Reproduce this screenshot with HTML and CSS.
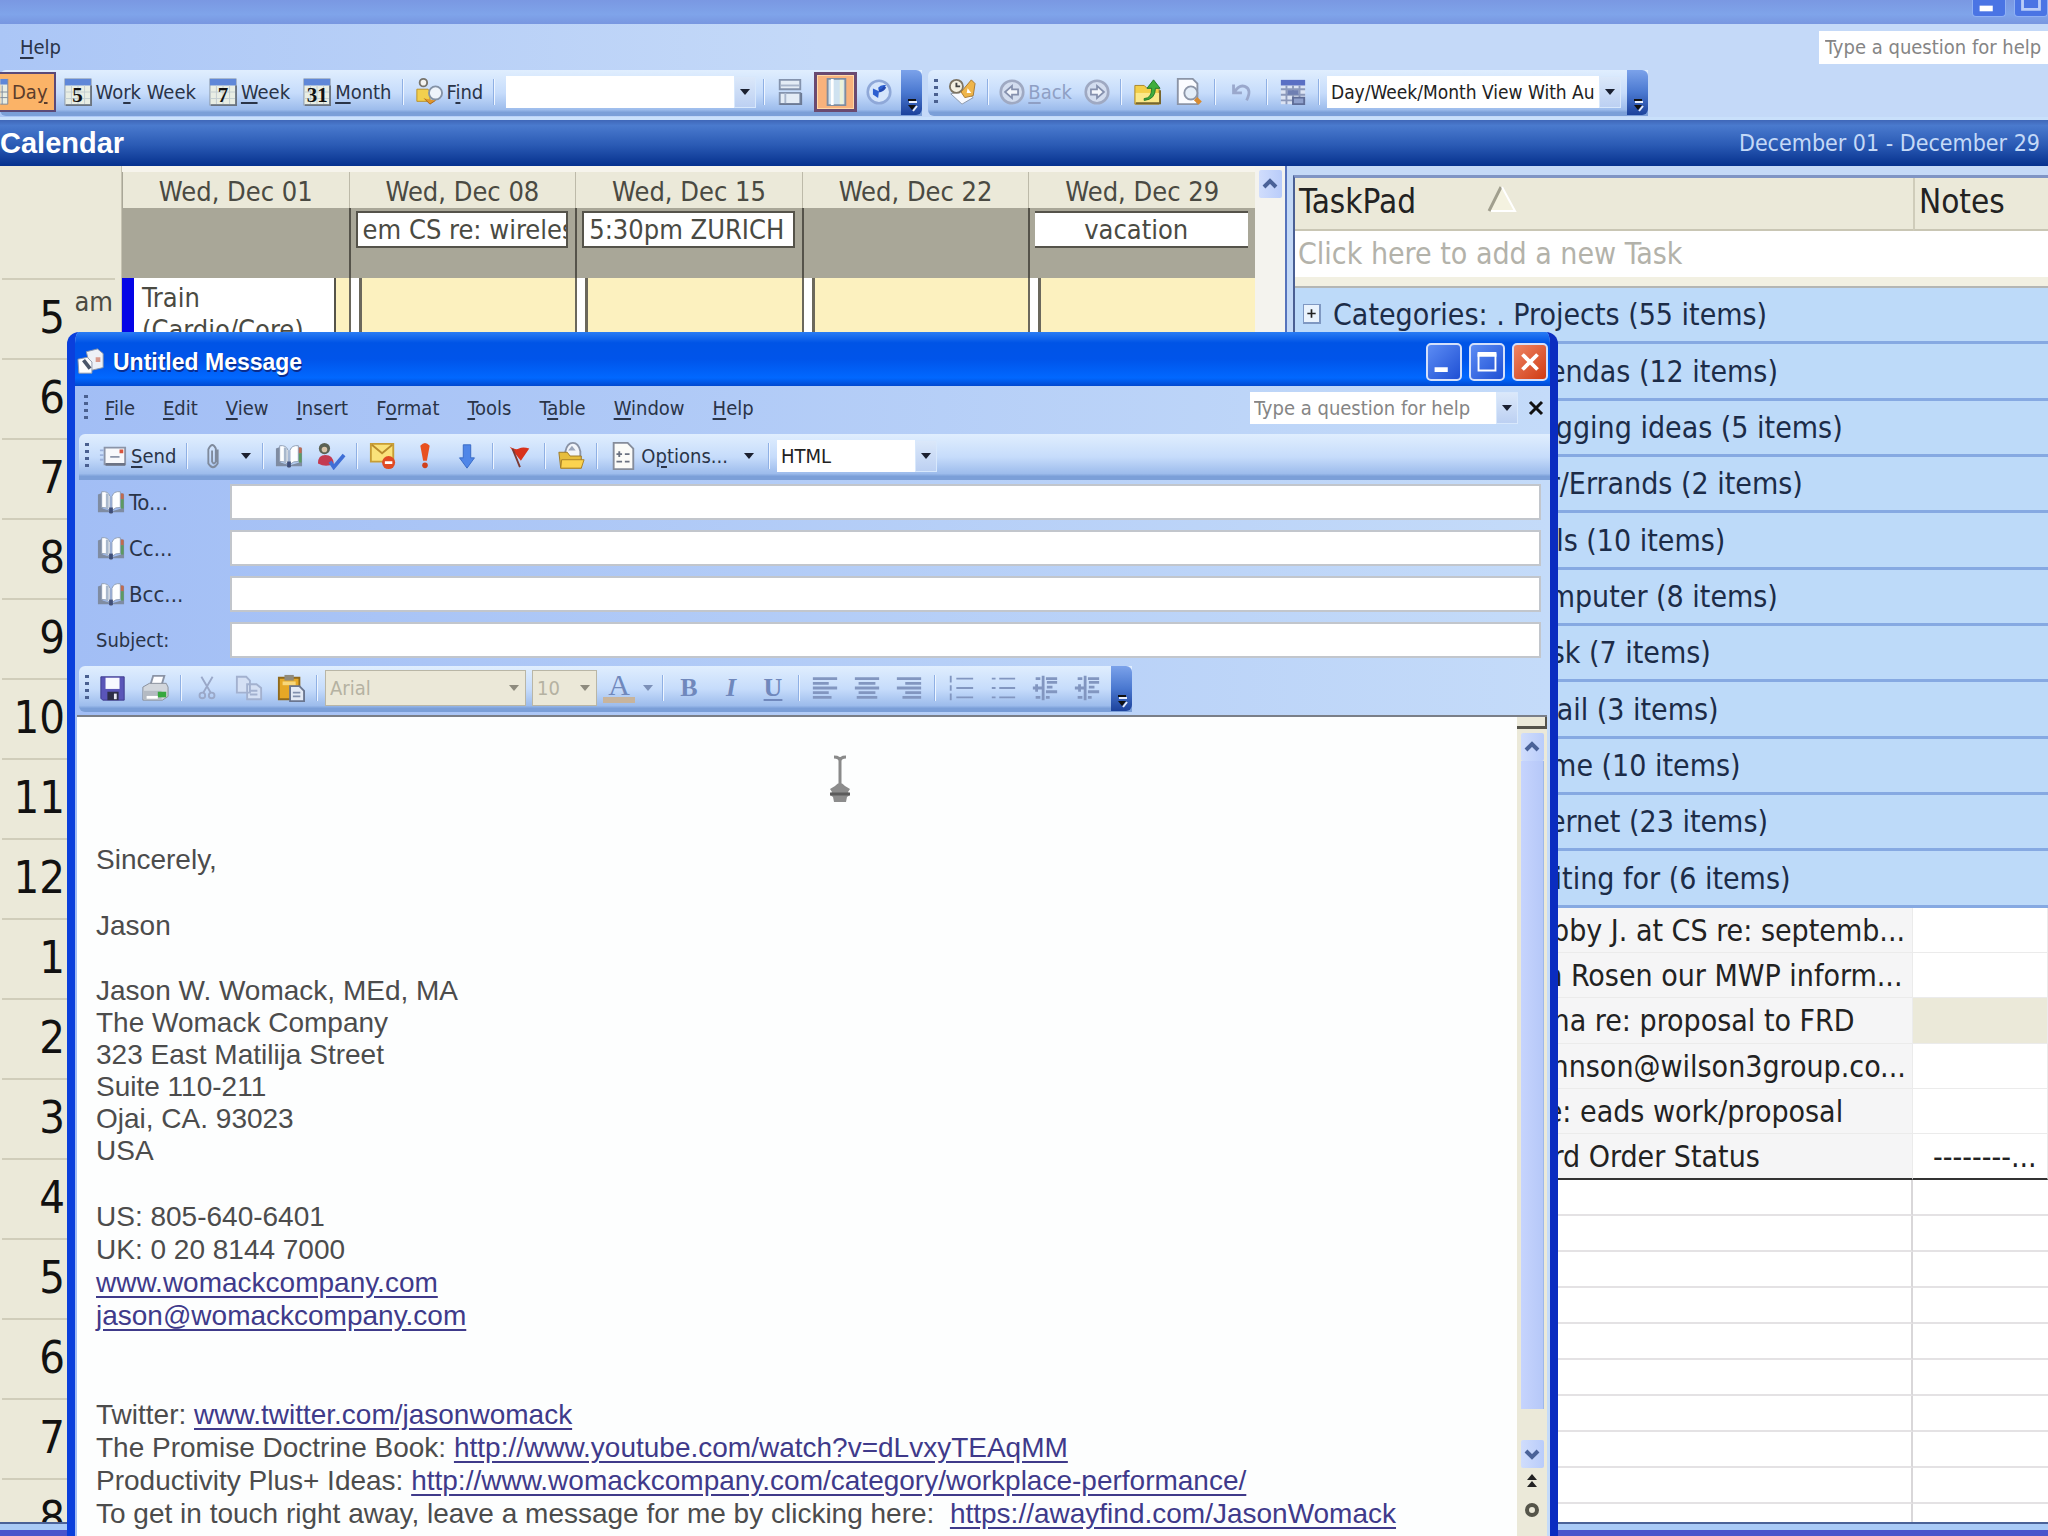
FILE: index.html
```html
<!DOCTYPE html>
<html lang="en">
<head>
    <meta charset="UTF-8">
    <meta name="viewport" content="width=device-width, initial-scale=1.0">
    <title>Calendar</title>
    <link rel="stylesheet" href="styles.css">
</head>
<body>
    <!-- shared icons -->
    <svg class="defs" aria-hidden="true">
        <symbol id="i-cal" viewBox="0 0 30 30">
            <rect x="1" y="1" width="28" height="28" fill="#e9eee4" stroke="#8b97a6"/>
            <rect x="1" y="1" width="28" height="7" fill="#5f87d8"/>
            <path d="M8 8v21M15 8v21M22 8v21M1 15h28M1 22h28" stroke="#c3ccd0"/>
            <path d="M2 29h27V8" fill="none" stroke="#6b7480" stroke-width="2"/>
        </symbol>
        <symbol id="i-book" viewBox="0 0 30 30">
            <path d="M1 7v19h12l2 2 2-2h12V7l-3-2v17l-10 3-10-3V5z" fill="#7f8ca2"/>
            <path d="M5 4q7-1 9 5v15q-4-4-9-3zM25 4q-7-1-9 5v15q4-4 9-3z" fill="#fdfeff" stroke="#8a9ab2"/>
            <path d="M11 6v16" stroke="#a9b8cc" stroke-width="3"/>
            <path d="M27 6v6" stroke="#c06a50" stroke-width="3"/>
            <path d="M27 12v10" stroke="#5c9a62" stroke-width="3"/>
            <path d="M13 21h4v6h-4z" fill="#3f4e78"/>
        </symbol>
        <symbol id="i-down" viewBox="0 0 12 12"><path d="M1 3h10L6 9z" fill="currentColor"/></symbol>
        <symbol id="i-cap" viewBox="0 0 20 44">
            <path d="M8 31h8" stroke="#e8eefc" stroke-width="2"/>
            <path d="M7 29h8" stroke="#111" stroke-width="2"/>
            <path d="M7 34h8l-4 5z" fill="#111"/>
            <path d="M12 40l4-5" stroke="#e8eefc" stroke-width="2"/>
        </symbol>
        <symbol id="i-up-chev" viewBox="0 0 20 20"><path d="M4 13l6-6 6 6" fill="none" stroke="#4a6298" stroke-width="4"/></symbol>
        <symbol id="i-down-chev" viewBox="0 0 20 20"><path d="M4 7l6 6 6-6" fill="none" stroke="#4a6298" stroke-width="4"/></symbol>
    </svg>

    <header class="app-head">
        <div class="app-title">
            <button class="app-btn" aria-label="Minimize"><svg viewBox="0 0 34 17"><path d="M7 9h14" stroke="#fff" stroke-width="6"/></svg></button>
            <button class="app-btn" aria-label="Maximize"><svg viewBox="0 0 34 17"><path d="M8 0v10h18V0" fill="none" stroke="#b9cdf8" stroke-width="3"/></svg></button>
        </div>
        <div class="app-menu">
            <button class="menu-item"><u>H</u>elp</button>
            <input class="ask" type="text" aria-label="Help search" placeholder="Type a question for help">
        </div>
        <div class="bars">
            <div class="toolbar first">
                <button class="tool day"><svg class="sliver" viewBox="0 0 9 30"><path d="M0 1h8v27H0z" fill="#e9eee4"/><path d="M0 1h8v6H0z" fill="#5f87d8"/><path d="M0 28h8V1M2 8v20M0 15h8M0 21h8" fill="none" stroke="#7c8899"/></svg><span>Da<u>y</u></span></button>
                <button class="tool"><span class="num"><svg class="icon"><use href="#i-cal"/></svg><b>5</b></span><span>Wo<u>r</u>k Week</span></button>
                <button class="tool"><span class="num"><svg class="icon"><use href="#i-cal"/></svg><b>7</b></span><span><u>W</u>eek</span></button>
                <button class="tool"><span class="num"><svg class="icon"><use href="#i-cal"/></svg><b>31</b></span><span><u>M</u>onth</span></button>
                <i class="sep"></i>
                <button class="tool"><svg class="icon" viewBox="0 0 30 30"><circle cx="9" cy="5" r="4" fill="#f4f4f0" stroke="#77746c" stroke-width="2"/><path d="M2 12h12l2 3v10H2z" fill="#f2cf4e" stroke="#b98f22"/><circle cx="22" cy="16" r="7" fill="#eef4fb" stroke="#8492a6" stroke-width="2"/><path d="M10 22l6 6 6-4" fill="#e0962c" stroke="#a8651a"/></svg><span>F<u>i</u>nd</span></button>
                <i class="sep"></i>
                <div class="combo find-box"><input type="text" aria-label="Find a contact"><button class="arrow" aria-label="Open list"><svg><use href="#i-down"/></svg></button></div>
                <i class="sep"></i>
                <button class="tool" aria-label="Reading pane"><svg class="icon" viewBox="0 0 30 30"><path d="M4 2h22v10H4zM4 16h22v12H4z" fill="#e4ecf6" stroke="#8493ad" stroke-width="2"/><path d="M5 8h20" stroke="#a9b6cc" stroke-width="2"/><path d="M10 16v12" stroke="#a9b6cc" stroke-width="2"/><path d="M4 28h23V16" fill="none" stroke="#6c7a94" stroke-width="2"/></svg></button>
                <button class="tool on" aria-label="Navigation pane"><svg class="icon" viewBox="0 0 30 30"><path d="M6 1h19v28H6z" fill="#cfe2f0" stroke="#7f8c9e" stroke-width="2"/><path d="M11 1v28" stroke="#fff" stroke-width="3"/><path d="M21 2v26" stroke="#eaf2da" stroke-width="4"/></svg></button>
                <button class="tool" aria-label="Help"><svg class="icon small" viewBox="0 0 30 30"><circle cx="15" cy="15" r="13" fill="#d5e5fb" stroke="#8fa8d8" stroke-width="3"/><path d="M8 11l7 3-1 8-6-4zM15 14q6-1 8-7-6-1-9 3z" fill="#2d5fd0"/><path d="M15 14q5-1 7-5" stroke="#2348b0" stroke-width="3" fill="none"/></svg></button>
                <button class="cap" aria-label="Toolbar options"><svg><use href="#i-cap"/></svg></button>
            </div>
            <div class="toolbar">
                <i class="grip"></i>
                <button class="tool" aria-label="New"><svg class="icon" viewBox="0 0 30 30"><path d="M3 17l14-4 10 8-12 7z" fill="#f7f9ff" stroke="#8794a8"/><circle cx="9" cy="9" r="7" fill="#f4f0e2" stroke="#7d7464" stroke-width="2"/><path d="M9 5v4h4" fill="none" stroke="#444" stroke-width="2"/><path d="M14 15L25 2l4 4-2 13-9 2z" fill="#efb54a" stroke="#a7762e"/><path d="M21 11l4 5h-5z" fill="#fff"/></svg></button>
                <i class="sep"></i>
                <button class="tool dim"><svg class="icon small" viewBox="0 0 30 30"><circle cx="15" cy="15" r="13" fill="#d3ddef" stroke="#9fa9c2" stroke-width="3"/><path d="M7 15l8-7v4h7v6h-7v4z" fill="#f3f6fc" stroke="#8590ad" stroke-width="2"/></svg><span><u>B</u>ack</span></button>
                <button class="tool dim" aria-label="Forward"><svg class="icon small" viewBox="0 0 30 30"><circle cx="15" cy="15" r="13" fill="#d3ddef" stroke="#9fa9c2" stroke-width="3"/><path d="M23 15l-8-7v4H8v6h7v4z" fill="#f3f6fc" stroke="#8590ad" stroke-width="2"/></svg></button>
                <i class="sep"></i>
                <button class="tool" aria-label="Up one level"><svg class="icon" viewBox="0 0 30 30"><path d="M2 8h10l3 3h13v17H2z" fill="#f3cf49" stroke="#a8842a"/><path d="M3 16h25v11H3z" fill="#fbe88a"/><path d="M3 27h26V13" fill="none" stroke="#77662e" stroke-width="2"/><path d="M12 22q8 0 8-11h-5l7-9 7 9h-5q0 12-12 13z" fill="#3fae3c" stroke="#23792a"/></svg></button>
                <button class="tool" aria-label="Print preview"><svg class="icon" viewBox="0 0 30 30"><path d="M3 1h16l5 5v22H3z" fill="#fbfcff" stroke="#8b94a6" stroke-width="2"/><circle cx="17" cy="16" r="7" fill="#e3edf8" stroke="#8d96a8" stroke-width="2"/><path d="M22 22l5 5" stroke="#d78b32" stroke-width="5"/></svg></button>
                <i class="sep"></i>
                <button class="tool dim" aria-label="Undo"><svg class="icon" viewBox="0 0 30 30"><path d="M7 7v9h9M8 15q5-8 11-6 8 3 2 15" fill="none" stroke="#9aa8cc" stroke-width="3"/></svg></button>
                <i class="sep"></i>
                <button class="tool" aria-label="Field chooser"><svg class="icon" viewBox="0 0 30 30"><path d="M2 2h26v26H2z" fill="#dbe3f3"/><path d="M2 2h26v6H2z" fill="#5a6fc4"/><path d="M2 12h26M2 18h26M2 24h26M8 8v20M15 8v20M22 8v20" stroke="#8c99bb" stroke-width="2"/><path d="M9 13h12v5H9z" fill="#6f7fb2"/><path d="M15 21h12v7H15z" fill="#8fa0cc" stroke="#5f6d98" stroke-width="2"/></svg></button>
                <i class="sep"></i>
                <div class="combo view-box"><select aria-label="Current view"><option>Day/Week/Month View With AutoPreview</option></select><span class="arrow"><svg><use href="#i-down"/></svg></span></div>
                <button class="cap" aria-label="Toolbar options"><svg><use href="#i-cap"/></svg></button>
            </div>
        </div>
    </header>

    <div class="banner">
        <h1>Calendar</h1>
        <span>December 01 - December 29</span>
    </div>

    <main class="panes">
        <section class="calendar">
            <div class="hours">
                <div class="hours-top"></div>
                <div class="hour">5<sup>am</sup></div>
                <div class="hour">6</div>
                <div class="hour">7</div>
                <div class="hour">8</div>
                <div class="hour">9</div>
                <div class="hour">10</div>
                <div class="hour">11</div>
                <div class="hour">12</div>
                <div class="hour">1</div>
                <div class="hour">2</div>
                <div class="hour">3</div>
                <div class="hour">4</div>
                <div class="hour">5</div>
                <div class="hour">6</div>
                <div class="hour">7</div>
                <div class="hour">8</div>
            </div>
            <div class="days">
                <div class="col">
                    <div class="date">Wed, Dec 01</div>
                    <div class="allday"></div>
                    <div class="slots busy"><div class="appt">Train (Cardio/Core)</div></div>
                </div>
                <div class="col">
                    <div class="date">Wed, Dec 08</div>
                    <div class="allday"><div class="event">em CS re: wireles</div></div>
                    <div class="slots"></div>
                </div>
                <div class="col">
                    <div class="date">Wed, Dec 15</div>
                    <div class="allday"><div class="event">5:30pm ZURICH</div></div>
                    <div class="slots"></div>
                </div>
                <div class="col">
                    <div class="date">Wed, Dec 22</div>
                    <div class="allday"></div>
                    <div class="slots"></div>
                </div>
                <div class="col">
                    <div class="date">Wed, Dec 29</div>
                    <div class="allday"><div class="event open">vacation</div></div>
                    <div class="slots"></div>
                </div>
            </div>
            <div class="scroll cal-scroll"><button aria-label="Scroll up"><svg><use href="#i-up-chev"/></svg></button></div>
        </section>

        <section class="taskpad">
            <table>
                <colgroup><col><col class="notes"></colgroup>
                <thead>
                    <tr><th>TaskPad <svg class="sort" viewBox="0 0 30 28"><path d="M15 2l13 24H3z" fill="#f4f2e0"/><path d="M2 26L14 2" stroke="#a19f8e" stroke-width="3"/><path d="M15 2l13 24H4" fill="none" stroke="#fff" stroke-width="2"/></svg></th><th>Notes</th></tr>
                </thead>
                <tbody>
                    <tr class="new"><td colspan="2"><input type="text" aria-label="New task" placeholder="Click here to add a new Task"></td></tr>
                    <tr class="group"><td colspan="2"><button class="plus" aria-label="Expand"><svg viewBox="0 0 18 18"><path d="M4 9h10M9 4v10" stroke="#222" stroke-width="2"/></svg></button>Categories: . Projects (55 items)</td></tr>
                    <tr class="group"><td colspan="2"><button class="plus" aria-label="Expand"></button>Categories: . Agendas (12 items)</td></tr>
                    <tr class="group"><td colspan="2"><button class="plus" aria-label="Expand"></button>Categories: . Blogging ideas (5 items)</td></tr>
                    <tr class="group"><td colspan="2"><button class="plus" aria-label="Expand"></button>Categories: . Car/Errands (2 items)</td></tr>
                    <tr class="group"><td colspan="2"><button class="plus" aria-label="Expand"></button>Categories: . Calls (10 items)</td></tr>
                    <tr class="group"><td colspan="2"><button class="plus" aria-label="Expand"></button>Categories: . Computer (8 items)</td></tr>
                    <tr class="group"><td colspan="2"><button class="plus" aria-label="Expand"></button>Categories: . Desk (7 items)</td></tr>
                    <tr class="group"><td colspan="2"><button class="plus" aria-label="Expand"></button>Categories: . Email (3 items)</td></tr>
                    <tr class="group"><td colspan="2"><button class="plus" aria-label="Expand"></button>Categories: . Home (10 items)</td></tr>
                    <tr class="group"><td colspan="2"><button class="plus" aria-label="Expand"></button>Categories: . Internet (23 items)</td></tr>
                    <tr class="group"><td colspan="2"><button class="plus" aria-label="Expand"></button>Categories: . Waiting for (6 items)</td></tr>
                    <tr class="task"><td>Bobby J. at CS re: septemb...</td><td></td></tr>
                    <tr class="task"><td>Lyn Rosen our MWP inform...</td><td></td></tr>
                    <tr class="task"><td class="sel">Anna re: proposal to FRD</td><td></td></tr>
                    <tr class="task"><td>tjohnson@wilson3group.co...</td><td></td></tr>
                    <tr class="task"><td>- re: eads work/proposal</td><td></td></tr>
                    <tr class="task"><td>Card Order Status</td><td>--------...</td></tr>
                    <tr class="blank"><td></td><td></td></tr>
                    <tr class="blank"><td></td><td></td></tr>
                    <tr class="blank"><td></td><td></td></tr>
                    <tr class="blank"><td></td><td></td></tr>
                    <tr class="blank"><td></td><td></td></tr>
                    <tr class="blank"><td></td><td></td></tr>
                    <tr class="blank"><td></td><td></td></tr>
                    <tr class="blank"><td></td><td></td></tr>
                    <tr class="blank"><td></td><td></td></tr>
                    <tr class="blank"><td></td><td></td></tr>
                </tbody>
            </table>
        </section>
    </main>
    <footer class="status"></footer>

    <!-- new message window -->
    <section class="window">
        <div class="titlebar">
            <svg class="icon" viewBox="0 0 30 30"><path d="M10 4l12-3 6 5v15l-13 3z" fill="#eef1f6" stroke="#8c96a8"/><path d="M1 12l10-2 5 5v12H2z" fill="#fdfdfd" stroke="#8c96a8"/><path d="M7 13l7 9" stroke="#4a5568" stroke-width="4"/><path d="M20 10h5v5h-5z" fill="#d99a8c"/></svg>
            <h2>Untitled Message</h2>
            <button class="win-btn" aria-label="Minimize"><svg viewBox="0 0 34 34"><path d="M7 25h14" stroke="#fff" stroke-width="5"/></svg></button>
            <button class="win-btn" aria-label="Maximize"><svg viewBox="0 0 34 34"><path d="M8 9h18v17H8z" fill="none" stroke="#fff" stroke-width="2"/><path d="M7 9h20" stroke="#fff" stroke-width="5"/></svg></button>
            <button class="win-btn close" aria-label="Close"><svg viewBox="0 0 34 34"><path d="M9 9l16 16M25 9L9 25" stroke="#fff" stroke-width="4"/></svg></button>
        </div>
        <div class="chrome">
            <nav class="menubar">
                <i class="grip"></i>
                <button class="menu-item"><u>F</u>ile</button>
                <button class="menu-item"><u>E</u>dit</button>
                <button class="menu-item"><u>V</u>iew</button>
                <button class="menu-item"><u>I</u>nsert</button>
                <button class="menu-item">F<u>o</u>rmat</button>
                <button class="menu-item"><u>T</u>ools</button>
                <button class="menu-item">T<u>a</u>ble</button>
                <button class="menu-item"><u>W</u>indow</button>
                <button class="menu-item"><u>H</u>elp</button>
                <div class="combo ask-box"><input type="text" aria-label="Help search" placeholder="Type a question for help"><button class="arrow" aria-label="Open list"><svg><use href="#i-down"/></svg></button></div>
                <button class="mini-close" aria-label="Close"><svg viewBox="0 0 16 16"><path d="M2 2l12 12M14 2L2 14" stroke="#111" stroke-width="3"/></svg></button>
            </nav>
            <div class="toolbar full">
                <i class="grip"></i>
                <button class="tool"><svg class="icon" viewBox="0 0 30 30"><path d="M6 6h22v18H6z" fill="#f7f8fb" stroke="#8b94a8" stroke-width="2"/><path d="M1 9h4M1 14h4M1 19h4" stroke="#9db2dc" stroke-width="2"/><path d="M12 16h10" stroke="#8b94a8" stroke-width="2"/><path d="M22 8h4v4h-4z" fill="#d8553e"/><path d="M7 24h21" stroke="#6c7384" stroke-width="3"/></svg><span><u>S</u>end</span></button>
                <i class="sep"></i>
                <button class="tool" aria-label="Attach"><svg class="icon" viewBox="0 0 30 30"><path d="M20 8v15q-5 8-10 0V8q4-9 8-1v14q-2 4-4 0V9" fill="none" stroke="#7f8a9c" stroke-width="2"/></svg></button>
                <button class="drop" aria-label="Attach options"><svg><use href="#i-down"/></svg></button>
                <i class="sep"></i>
                <button class="tool" aria-label="Address book"><svg class="icon"><use href="#i-book"/></svg></button>
                <button class="tool" aria-label="Check names"><svg class="icon" viewBox="0 0 30 30"><circle cx="8" cy="7" r="6" fill="#5b6254"/><circle cx="8" cy="8" r="3" fill="#d7c4a8"/><path d="M1 23q0-9 8-9t9 9q-8 5-17 0z" fill="#c43a50"/><path d="M14 21l4 6 11-13" fill="none" stroke="#3f6fd6" stroke-width="4"/></svg></button>
                <i class="sep"></i>
                <button class="tool" aria-label="Permission"><svg class="icon" viewBox="0 0 30 30"><path d="M2 2h24v19H2z" fill="#fae27a" stroke="#c79d35" stroke-width="2"/><path d="M3 3l11 9 11-9" fill="none" stroke="#b98c2c" stroke-width="2"/><circle cx="21" cy="22" r="7" fill="#e04a24"/><path d="M17 22h8" stroke="#fff" stroke-width="3"/></svg></button>
                <button class="tool" aria-label="High importance"><svg class="icon" viewBox="0 0 30 30"><path d="M10 4q5-6 10 0l-3 16h-4z" fill="#e8501f"/><circle cx="15" cy="25" r="3" fill="#d0401a"/></svg></button>
                <button class="tool" aria-label="Low importance"><svg class="icon" viewBox="0 0 30 30"><path d="M11 3h8v14h4l-8 11-8-11h4z" fill="#4f86e8" stroke="#3768c4"/></svg></button>
                <i class="sep"></i>
                <button class="tool" aria-label="Flag"><svg class="icon" viewBox="0 0 30 30"><path d="M5 5q6 4 10 2t11 0l-9 13z" fill="#d8321c"/><path d="M8 7l8 20" stroke="#7c3a34" stroke-width="2"/></svg></button>
                <i class="sep"></i>
                <button class="tool" aria-label="Create rule"><svg class="icon" viewBox="0 0 30 30"><path d="M9 10q2-9 8-9t8 9v10H9z" fill="#f2f5fa" stroke="#8a93a5" stroke-width="2"/><path d="M12 9h8l-4-5z" fill="#9ca6ba"/><path d="M2 11h9l3 4h12v13H4z" fill="#e6bd3c" stroke="#9a7626"/><path d="M5 19h24l-3 9H4z" fill="#fbd34f" stroke="#a87f26"/></svg></button>
                <i class="sep"></i>
                <button class="tool"><svg class="icon" viewBox="0 0 30 30"><path d="M5 1h15l6 6v22H5z" fill="#fbfbf8" stroke="#858c9a" stroke-width="2"/><path d="M11 10v6M8 13h6M8 21h6M17 13h5M17 21h5" stroke="#6a7180" stroke-width="2"/></svg><span>O<u>p</u>tions...</span></button>
                <button class="drop more" aria-label="More options"><svg><use href="#i-down"/></svg></button>
                <i class="sep"></i>
                <div class="combo html-box"><select aria-label="Message format"><option>HTML</option></select><span class="arrow"><svg><use href="#i-down"/></svg></span></div>
            </div>
            <form class="fields">
                <button type="button" class="addr"><svg class="icon"><use href="#i-book"/></svg>To...</button><input type="text" aria-label="To">
                <button type="button" class="addr"><svg class="icon"><use href="#i-book"/></svg>Cc...</button><input type="text" aria-label="Cc">
                <button type="button" class="addr"><svg class="icon"><use href="#i-book"/></svg>Bcc...</button><input type="text" aria-label="Bcc">
                <label for="subject">Subject:</label><input type="text" id="subject">
            </form>
            <div class="bars">
                <div class="toolbar">
                    <i class="grip"></i>
                    <button class="tool" aria-label="Save"><svg class="icon" viewBox="0 0 30 30"><path d="M2 3h25v25H4l-2-2z" fill="#5a55b8" stroke="#3c3a8c"/><path d="M7 4h15v12H7z" fill="#f7f8ff"/><path d="M9 19h12v9H9z" fill="#2e2e48"/><path d="M16 21h3v6h-3z" fill="#e8e8f4"/></svg></button>
                    <button class="tool" aria-label="Print"><svg class="icon" viewBox="0 0 30 30"><path d="M10 12l3-10h12l-3 10z" fill="#fdfdff" stroke="#8b94a6" stroke-width="2"/><path d="M2 14l7-4h18l2 4v10l-6 4H2z" fill="#d2d6dc" stroke="#858c98"/><path d="M3 18h19v9H3z" fill="#b4bac2"/><path d="M18 19h9v6h-9z" fill="#36a83e"/><path d="M6 25h12" stroke="#fff" stroke-width="3"/></svg></button>
                    <i class="sep"></i>
                    <button class="tool" aria-label="Cut"><svg class="icon" viewBox="0 0 30 30"><path d="M9 3l10 17M21 3L11 20" stroke="#9aa8c8" stroke-width="2"/><circle cx="10" cy="23" r="3" fill="none" stroke="#9aa8c8" stroke-width="2"/><circle cx="20" cy="23" r="3" fill="none" stroke="#9aa8c8" stroke-width="2"/></svg></button>
                    <button class="tool" aria-label="Copy"><svg class="icon" viewBox="0 0 30 30"><path d="M2 3h10l4 4v13H2zM13 11h10l5 4v12H13z" fill="#d5e0f4" stroke="#a3b1cf" stroke-width="2"/><path d="M16 18h8M16 22h8" stroke="#a3b1cf" stroke-width="2"/></svg></button>
                    <button class="tool" aria-label="Paste"><svg class="icon" viewBox="0 0 30 30"><path d="M2 4h22v23H2z" fill="#e6a826" stroke="#8f6a1e" stroke-width="2"/><path d="M8 1h10v6H8z" fill="#8f8a7c"/><path d="M6 8h14v4H6z" fill="#f8d77a"/><path d="M14 13h10l5 5v11H14z" fill="#e4eaf5" stroke="#6a7690" stroke-width="2"/><path d="M17 20h8M17 24h8" stroke="#8290ad" stroke-width="2"/></svg></button>
                    <i class="sep"></i>
                    <div class="combo off font-box"><select aria-label="Font" disabled><option>Arial</option></select><span class="arrow"><svg><use href="#i-down"/></svg></span></div>
                    <div class="combo off size-box"><select aria-label="Font size" disabled><option>10</option></select><span class="arrow"><svg><use href="#i-down"/></svg></span></div>
                    <button class="tool letter ink" aria-label="Font color">A</button>
                    <button class="drop dim" aria-label="Font color options"><svg><use href="#i-down"/></svg></button>
                    <i class="sep"></i>
                    <button class="tool letter"><b>B</b></button>
                    <button class="tool letter"><b><em>I</em></b></button>
                    <button class="tool letter"><b><u>U</u></b></button>
                    <i class="sep"></i>
                    <button class="tool" aria-label="Align left"><svg class="icon lines" viewBox="0 0 30 30"><path d="M2 5h26M2 10h17M2 15h26M2 20h17M2 25h20"/></svg></button>
                    <button class="tool" aria-label="Center"><svg class="icon lines" viewBox="0 0 30 30"><path d="M2 5h26M6 10h18M2 15h26M6 20h18M4 25h22"/></svg></button>
                    <button class="tool" aria-label="Align right"><svg class="icon lines" viewBox="0 0 30 30"><path d="M2 5h26M11 10h17M2 15h26M11 20h17M8 25h20"/></svg></button>
                    <i class="sep"></i>
                    <button class="tool" aria-label="Numbering"><svg class="icon lines thin" viewBox="0 0 30 30"><path d="M4 2v7M4 12v6M4 21v7M10 5h18M10 15h18M10 25h18"/></svg></button>
                    <button class="tool" aria-label="Bullets"><svg class="icon lines thin" viewBox="0 0 30 30"><path d="M3 5h4M3 15h4M3 25h4M11 5h17M11 15h17M11 25h17"/></svg></button>
                    <button class="tool" aria-label="Decrease indent"><svg class="icon lines" viewBox="0 0 30 30"><path d="M5 5h5M16 5h12M17 9h11M17 14h6M2 15h10M16 19h12M5 25h5M16 25h4M13 2v26M6 11v8"/></svg></button>
                    <button class="tool" aria-label="Increase indent"><svg class="icon lines" viewBox="0 0 30 30"><path d="M5 5h5M16 5h12M17 9h11M17 14h6M2 15h10M16 19h12M5 25h5M16 25h4M13 2v26M7 11v8"/></svg></button>
                    <button class="cap" aria-label="Toolbar options"><svg><use href="#i-cap"/></svg></button>
                </div>
            </div>
            <div class="editor">
                <div class="letter-body" contenteditable="true" spellcheck="false">
                    <p>Sincerely,</p>
                    <p>Jason</p>
                    <p class="address">Jason W. Womack, MEd, MA<br>The Womack Company<br>323 East Matilija Street<br>Suite 110-211<br>Ojai, CA. 93023<br>USA</p>
                    <p class="contact">US: 805-640-6401<br>UK: 0 20 8144 7000<br><a href="#">www.womackcompany.com</a><br><a href="#">jason@womackcompany.com</a></p>
                    <p>Twitter: <a href="#">www.twitter.com/jasonwomack</a><br>The Promise Doctrine Book: <a href="#">http://www.youtube.com/watch?v=dLvxyTEAqMM</a><br>Productivity Plus+ Ideas: <a href="#">http://www.womackcompany.com/category/workplace-performance/</a><br>To get in touch right away, leave a message for me by clicking here: &nbsp;<a href="#">https://awayfind.com/JasonWomack</a></p>
                </div>
                <div class="scroll">
                    <i class="split"></i>
                    <button aria-label="Scroll up"><svg><use href="#i-up-chev"/></svg></button>
                    <i class="thumb"></i>
                    <button aria-label="Scroll down"><svg><use href="#i-down-chev"/></svg></button>
                    <button class="jump" aria-label="Previous"><svg viewBox="0 0 20 20"><path d="M10 2l5 6H5zM10 9l5 6H5z" fill="#222"/></svg></button>
                    <button class="jump" aria-label="Select browse object"><svg viewBox="0 0 20 20"><circle cx="10" cy="10" r="5" fill="none" stroke="#55554a" stroke-width="4"/></svg></button>
                </div>
                <svg class="cursor" viewBox="0 0 24 50"><path d="M6 2q6 0 6 4 0-4 6-4M12 6v26" fill="none" stroke="#8a8a8a" stroke-width="3"/><path d="M7 31q5-6 10 0l5 3-2 3 2 3-3 2-1 5H6l-1-5-3-2 2-3-2-3z" fill="#8c8c8c"/><path d="M2 39h20" stroke="#5c5c5c" stroke-width="3"/></svg>
            </div>
        </div>
    </section>
</body>
</html>
```
FILE: styles.css
```css
* {
    box-sizing: border-box;
}
body {
    margin: 0;
    height: 100vh;
    display: flex;
    flex-direction: column;
    overflow: hidden;
    position: relative;
    font-family: "DejaVu Sans Condensed", "DejaVu Sans", sans-serif;
    font-size: 20px;
    color: #2a3448;
    background: #c4d9f7;
}
button, input, select {
    font: inherit;
    color: inherit;
    border: 0;
    padding: 0;
    margin: 0;
    background: none;
    border-radius: 0;
}
input, select {
    min-width: 0;
    outline: 0;
}
svg {
    display: block;
}
u {
    text-underline-offset: 3px;
}
.defs {
    position: absolute;
    width: 0;
    height: 0;
}

/* main window top */
.app-head {
    background: linear-gradient(to right, #abc6f6, #c4d9f8 40%, #c4d9f8);
}
.app-title {
    height: 24px;
    display: flex;
    justify-content: flex-end;
    gap: 8px;
    background: linear-gradient(#7a98e2, #7fa4ea 60%, #7896e0);
}
.app-btn {
    width: 34px;
    height: 17px;
    background: #4a74e4;
    border: 1px solid #8fb0f4;
    border-top: 0;
    border-radius: 0 0 4px 4px;
}
.app-menu {
    height: 46px;
    display: flex;
    align-items: center;
    justify-content: space-between;
    padding-left: 20px;
}
.ask {
    width: 229px;
    height: 33px;
    padding-left: 6px;
    background: #fff;
}
.ask::placeholder, .ask-box input::placeholder {
    color: #858585;
    opacity: 1;
}

/* toolbars */
.bars {
    display: flex;
    gap: 6px;
}
.toolbar {
    display: flex;
    align-items: center;
    gap: 6px;
    height: 46px;
    padding-left: 6px;
    padding-bottom: 3px;
    border-radius: 6px 0 0 6px;
    background: linear-gradient(#e0eefe, #c6dcfb 50%, #9dbcec 86%, #7b9fd8 92%);
}
.toolbar.first {
    padding-left: 0;
}
.toolbar.full {
    border-radius: 6px 0 0 0;
}
.app-head > .bars {
    border-bottom: 3px solid #c9e0fb;
    height: 50px;
}
.tool {
    display: flex;
    align-items: center;
    gap: 3px;
    padding: 0 3px;
    height: 38px;
    white-space: nowrap;
}
.icon {
    width: 30px;
    height: 28px;
    flex: none;
}
.icon.small {
    width: 26px;
}
.tool.day {
    height: 40px;
    padding: 0 6px 0 0;
    margin-right: -2px;
    background: #fbb367;
    border: 2px solid #5b4a78;
    border-left: 0;
    color: #5c3d2c;
}
.sliver {
    width: 9px;
    height: 28px;
}
.num {
    position: relative;
}
.num b {
    position: absolute;
    left: 0;
    right: 0;
    top: 5px;
    text-align: center;
    font: bold 21px "Liberation Serif", serif;
    color: #111;
}
.tool.on {
    height: 40px;
    width: 43px;
    justify-content: center;
    background: #f8b27c;
    border: 3px solid #6a4a70;
    box-shadow: inset 0 0 0 1px #ffd9a8;
}
.dim {
    color: #8f9fc4;
}
.sep {
    width: 2px;
    height: 26px;
    margin: 0 1px;
    background: #8fb0e4;
    border-right: 1px solid #eef5ff;
}
.grip {
    width: 4px;
    height: 26px;
    background: repeating-linear-gradient(#4a6090 0 3px, transparent 3px 7px);
}
.cap {
    width: 21px;
    height: 45px;
    margin-bottom: -4px;
    align-self: flex-start;
    border-radius: 0 6px 6px 0;
    background: linear-gradient(#7ba2ea, #4a78d0 50%, #1c429c);
}
.cap svg {
    width: 20px;
    height: 44px;
}
.combo {
    display: flex;
    height: 32px;
    background: #fff;
}
.combo input, .combo select {
    flex: 1;
    padding: 0 4px;
    appearance: none;
    opacity: 1;
}
.arrow {
    width: 22px;
    display: flex;
    align-items: center;
    justify-content: center;
    background: linear-gradient(#dbe8fa, #bcd0f2);
    border: 1px solid #d8e8fc;
    color: #1b2030;
}
.arrow svg, .drop svg {
    width: 12px;
    height: 12px;
}
.find-box {
    width: 250px;
    margin-left: 4px;
}
.view-box {
    width: 294px;
    font-size: 19px;
    color: #222;
}
.html-box {
    width: 160px;
    color: #222;
}
.ask-box {
    width: 268px;
    margin-left: auto;
}
.drop {
    width: 18px;
    height: 30px;
    color: #1b2030;
    display: flex;
    align-items: center;
    justify-content: center;
}
.drop.more {
    width: 24px;
}
.drop.dim {
    width: 14px;
    color: #7c90b8;
}
.combo.off {
    height: 36px;
    background: #ebe8d8;
    border: 1px solid #b9b6a6;
    color: #b5b2a2;
}
.off .arrow {
    background: none;
    border: 0;
    color: #8e8b7e;
}
.off select {
    color: #b5b2a2;
}
.font-box {
    width: 201px;
}
.size-box {
    width: 65px;
}
.letter {
    width: 36px;
    justify-content: center;
    font-family: "Liberation Serif", serif;
    font-size: 26px;
    color: #7088bc;
}
.letter.ink {
    width: 32px;
    font-size: 30px;
    height: 30px;
    line-height: 24px;
    border-bottom: 6px solid #c8b49c;
}
.lines path {
    fill: none;
    stroke: #8296c0;
    stroke-width: 3;
}
.lines.thin path {
    stroke-width: 2;
}

/* blue banner */
.banner {
    height: 46px;
    flex: none;
    display: flex;
    align-items: center;
    justify-content: space-between;
    padding: 0 8px 0 0;
    background: linear-gradient(#3f67b8, #4a7ace 12%, #2a5ab4 55%, #06318e);
    color: #c4d9f7;
    font-size: 23px;
}
.banner h1 {
    margin: 0;
    font: bold 29px "Liberation Sans", sans-serif;
    color: #fff;
}

/* calendar */
.panes {
    flex: 1;
    min-height: 0;
    display: grid;
    grid-template-columns: 1287fr 761fr;
}
.calendar {
    min-height: 0;
    display: grid;
    grid-template-columns: 122px 1fr 30px;
    overflow: hidden;
    background: #ebe9d9;
    border-right: 2px solid #5673bc;
    color: #4a4a42;
    font-size: 27px;
}
.hours {
    border-right: 1px solid #c6c3b2;
}
.hours-top {
    height: 112px;
}
.hour {
    position: relative;
    height: 80px;
    margin: 0 6px 0 2px;
    padding-right: 50px;
    border-top: 2px solid #d0cdba;
    text-align: right;
    font-size: 45px;
    line-height: 76px;
    color: #111;
}
.hour sup {
    position: absolute;
    right: 2px;
    top: 4px;
    font-size: 27px;
    line-height: 36px;
    color: #4a4a42;
}
.days {
    display: grid;
    grid-template-columns: repeat(5, 1fr);
    border-top: 6px solid #f6f4ec;
}
.col {
    display: flex;
    flex-direction: column;
    min-width: 0;
}
.date {
    height: 36px;
    line-height: 40px;
    text-align: center;
    border-left: 1px solid #bdbaa9;
}
.allday {
    height: 70px;
    padding: 3px 7px 0 5px;
    background: #a9a798;
    border-left: 2px solid #55534a;
}
.col:first-child .allday, .col:first-child .date {
    border-left-color: #a9a798;
}
.event {
    height: 37px;
    padding-left: 5px;
    line-height: 33px;
    overflow: hidden;
    white-space: nowrap;
    background: #fff;
    border: 2px solid #55534a;
}
.event.open {
    border-left: 0;
    border-right: 0;
    padding-right: 16px;
    text-align: center;
}
.slots {
    flex: 1;
    margin-left: 10px;
    border-left: 3px solid #6b685c;
    background: #fcf1bf;
    box-shadow: -8px 0 #fff, -10px 0 #6b685c;
}
.slots.busy {
    margin: 0;
    padding-right: 13px;
    border: 0;
    box-shadow: none;
}
.appt {
    height: 70px;
    padding: 4px 50px 0 8px;
    line-height: 32px;
    background: #fff;
    border-left: 12px solid #0505e6;
    border-right: 2px solid #55534a;
    overflow: hidden;
}
.scroll {
    display: flex;
    flex-direction: column;
    align-items: center;
    background: #f4f3ee;
}
.scroll button {
    width: 23px;
    height: 28px;
    background: linear-gradient(to right, #d0ddfc, #b9ccfa);
    border-radius: 2px;
    display: flex;
    align-items: center;
    justify-content: center;
}
.scroll svg {
    width: 20px;
    height: 20px;
}
.cal-scroll {
    padding-top: 4px;
}

/* task pad */
.taskpad {
    min-width: 0;
    overflow: hidden;
    margin: 9px 0 0 6px;
    border-left: 2px solid #4a5f94;
    border-top: 3px solid #7f94c4;
    background: #fff;
}
.taskpad table {
    width: 100%;
    table-layout: fixed;
    border-collapse: separate;
    border-spacing: 0;
    font-size: 30px;
    color: #222;
}
.notes {
    width: 135px;
}
.taskpad th {
    height: 53px;
    padding: 0 4px 4px;
    font-size: 33px;
    font-weight: normal;
    text-align: left;
    background: #ebe9d9;
    border-bottom: 2px solid #c9c6b4;
}
.taskpad th + th {
    border-left: 2px solid #cfccba;
}
.sort {
    display: inline-block;
    width: 30px;
    height: 28px;
    margin-left: 62px;
}
.taskpad td {
    padding: 0 0 0 4px;
    overflow: hidden;
    white-space: nowrap;
}
.new td {
    height: 57px;
    padding: 0 0 10px 3px;
    border-bottom: 2px solid #b4b6b4;
    background: linear-gradient(#fff 46px, #f2f0e2 46px);
}
.new input {
    width: 100%;
    height: 44px;
}
.new input::placeholder {
    color: #b3b2aa;
    opacity: 1;
}
.group td {
    height: 56px;
    background: #bddaf9;
    border-bottom: 3px solid #86a9e2;
    color: #1c2c48;
}
.group:nth-child(3n) td {
    height: 57px;
}
.plus {
    width: 18px;
    height: 20px;
    margin: 0 12px 0 4px;
    background: #eaf3fd;
    border: 1px solid #7f98c2;
    border-right-width: 2px;
    border-bottom-width: 2px;
    vertical-align: 3px;
}
.task td {
    height: 45px;
    border-bottom: 1px solid #ebebeb;
    border-right: 1px solid #ebebeb;
    padding-left: 20px;
}
.task td:first-child {
    padding-left: 222px;
    background: #f5f5f6;
}
.task .sel + td {
    background: #ebe9d9;
}
.task:nth-child(3n) td {
    height: 46px;
}
.task:has(+ .blank) td {
    border-bottom: 2px solid #333;
}
.blank td {
    height: 36px;
    border-bottom: 2px solid #e4e2e4;
}
.blank td:first-child {
    border-right: 2px solid #d9d7d9;
}
.status {
    height: 14px;
    flex: none;
    background: linear-gradient(#4a6298 2px, #a9caf6 2px 8px, #4a55cc 8px);
}

/* message window */
.window {
    position: absolute;
    left: 67px;
    right: 490px;
    top: 332px;
    bottom: 0;
    display: flex;
    flex-direction: column;
    overflow: hidden;
    border: solid #0a3fdc;
    border-width: 0 8px 0 8px;
    border-right-color: #0a2cc0;
    border-radius: 12px 12px 0 0;
    background: #a8c2f5;
}
.titlebar {
    height: 54px;
    flex: none;
    display: flex;
    align-items: center;
    gap: 7px;
    padding: 6px 3px 0 2px;
    margin: 0 -1px;
    background: linear-gradient(#2a7df4, #0054e6 20%, #0054ea 50%, #0168ff 85%, #0048d0);
}
.titlebar h2 {
    flex: 1;
    margin: 0;
    font: bold 23px "Liberation Sans", sans-serif;
    color: #fff;
    text-shadow: 1px 2px #0a2c8c;
}
.win-btn {
    width: 36px;
    height: 38px;
    border: 2px solid #d4e0fb;
    border-radius: 5px;
    background: linear-gradient(135deg, #5c8cf4, #1f50d4);
}
.win-btn.close {
    background: linear-gradient(135deg, #ee8464, #d03c14);
}
.chrome {
    flex: 1;
    min-height: 0;
    display: flex;
    flex-direction: column;
    background: linear-gradient(to right, #a2bef5, #c4dbf9);
}
.menubar {
    height: 48px;
    flex: none;
    display: flex;
    align-items: center;
    gap: 28px;
    padding: 0 6px 4px 9px;
}
.menubar .grip {
    margin-right: -11px;
}
.mini-close {
    width: 16px;
    margin-left: -18px;
}
.chrome > .toolbar {
    flex: none;
    margin-left: 4px;
}
.chrome > .bars {
    padding-left: 4px;
}
.fields {
    display: grid;
    grid-template-columns: 134px 1fr;
    grid-auto-rows: 36px;
    row-gap: 10px;
    padding: 4px 9px 8px 21px;
    align-items: center;
}
.fields input {
    height: 36px;
    padding: 0 6px;
    background: #fff;
    border: 2px solid #c2c6cc;
}
.addr {
    display: flex;
    align-items: center;
    gap: 3px;
    font-size: 22px;
}
.editor {
    position: relative;
    flex: 1;
    min-height: 0;
    display: flex;
    margin: 3px 3px 0 2px;
    border-top: 2px solid #7a7f88;
    background: #fdfefe;
}
.letter-body {
    flex: 1;
    min-width: 0;
    padding: 126px 0 0 19px;
    outline: 0;
    font: 28px/33px "Liberation Sans", sans-serif;
    color: #4c4c4c;
    white-space: nowrap;
    overflow: hidden;
}
.letter-body p {
    margin: 0 0 33px;
}
.letter-body .address {
    line-height: 32px;
}
.letter-body .contact {
    margin-bottom: 66px;
}
.letter-body a {
    color: #3f3a8a;
    text-underline-offset: 4px;
}
.editor .scroll {
    width: 30px;
    padding-bottom: 12px;
    background: #ebe9d9;
}
.split {
    width: 30px;
    height: 12px;
    flex: none;
    margin-bottom: 4px;
    background: #ebe9d9;
    border: solid #55534a;
    border-width: 0 2px 3px 0;
}
.thumb {
    width: 23px;
    flex: 1;
    margin-bottom: 31px;
    background: linear-gradient(to right, #c6d4fd, #b6c8f8);
    border-right: 1px solid #9fb8e8;
}
.scroll .jump {
    background: none;
}
.cursor {
    position: absolute;
    left: 751px;
    top: 38px;
    width: 24px;
    height: 50px;
}
```
